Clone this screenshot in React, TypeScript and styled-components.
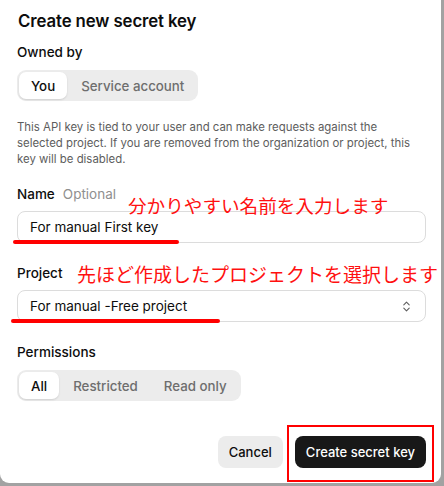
import React from "react";
import styled, { createGlobalStyle } from "styled-components";
import { ChevronsUpDown } from "lucide-react";

const GlobalStyle = createGlobalStyle`
  html, body {
    margin: 0;
    padding: 0;
    background: #a2a2a2;
    overflow: hidden;
  }
  * {
    box-sizing: border-box;
  }
`;

const Card = styled.div`
  position: relative;
  width: 441px;
  height: 483px;
  background: #ffffff;
  border-radius: 0 0 9px 9px;
  padding: 9px 15px 0 17px;
  font-family: Inter, "Noto Sans", sans-serif;
  color: #0d0d0d;
  display: flex;
  flex-direction: column;
`;

const Title = styled.h2`
  margin: 0 0 0 1px;
  font-size: 16.8px;
  line-height: 24px;
  font-weight: 600;
  letter-spacing: -0.1px;
`;

const Label = styled.div<{ $top: number }>`
  margin-top: ${(p) => p.$top}px;
  font-size: 13.5px;
  line-height: 20px;
  font-weight: 500;
  display: flex;
  gap: 8px;
`;

const Hint = styled.span`
  color: #8f8f8f;
  font-weight: 400;
`;

const Segmented = styled.div`
  margin-top: 8px;
  align-self: flex-start;
  display: flex;
  padding: 2px;
  gap: 2px;
  background: #ececec;
  border-radius: 9px;
`;

const Segment = styled.div<{ $active?: boolean }>`
  height: 27px;
  padding: 0 12px;
  display: flex;
  align-items: center;
  border-radius: 7px;
  font-size: 13.3px;
  font-weight: 500;
  color: ${(p) => (p.$active ? "#0d0d0d" : "#6e6e6e")};
  background: ${(p) => (p.$active ? "#ffffff" : "transparent")};
  box-shadow: ${(p) => (p.$active ? "0 1px 2px rgba(0,0,0,0.12)" : "none")};
`;

const Description = styled.p`
  margin: 18px 0 0;
  font-size: 11.4px;
  line-height: 16px;
  color: #5d5d5d;
`;

const Field = styled.div`
  margin-top: 7px;
  height: 32px;
  border: 1px solid #dcdcdc;
  border-radius: 8px;
  padding: 0 12px;
  display: flex;
  align-items: center;
  justify-content: space-between;
  font-size: 13.5px;
  color: #0d0d0d;
`;

const Footer = styled.div`
  margin-top: 35px;
  display: flex;
  justify-content: flex-end;
  gap: 12px;
`;

const Button = styled.button<{ $primary?: boolean }>`
  height: 32px;
  padding: 0 11px;
  border: none;
  border-radius: 8px;
  font-family: Inter, "Noto Sans", sans-serif;
  font-size: 13px;
  font-weight: 500;
  color: ${(p) => (p.$primary ? "#ffffff" : "#0d0d0d")};
  background: ${(p) => (p.$primary ? "#181818" : "#ececec")};
`;

const Note = styled.div<{ $x: number; $y: number; $size: number }>`
  position: absolute;
  left: ${(p) => p.$x}px;
  top: ${(p) => p.$y}px;
  font-family: "Noto Sans CJK JP", sans-serif;
  font-size: ${(p) => p.$size}px;
  line-height: 1;
  color: #ff1010;
  white-space: nowrap;
`;

const Underline = styled.div<{ $x: number; $y: number; $w: number }>`
  position: absolute;
  left: ${(p) => p.$x}px;
  top: ${(p) => p.$y}px;
  width: ${(p) => p.$w}px;
  height: 4px;
  border-radius: 2px;
  background: #ff0000;
`;

const HighlightBox = styled.div`
  position: absolute;
  left: 287px;
  top: 425px;
  width: 147px;
  height: 57px;
  border: 2px solid #ff0000;
`;

export default function App() {
  return (
    <>
      <GlobalStyle />
      <Card>
        <Title>Create new secret key</Title>

        <Label $top={9}>Owned by</Label>
        <Segmented>
          <Segment $active>You</Segment>
          <Segment>Service account</Segment>
        </Segmented>

        <Description>
          This API key is tied to your user and can make requests against the
          selected project. If you are removed from the organization or project,
          this key will be disabled.
        </Description>

        <Label $top={17}>
          Name <Hint>Optional</Hint>
        </Label>
        <Field>For manual First key</Field>

        <Label $top={20}>Project</Label>
        <Field>
          For manual -Free project
          <ChevronsUpDown size={13} color="#5d5d5d" strokeWidth={2} />
        </Field>

        <Label $top={20}>Permissions</Label>
        <Segmented>
          <Segment $active>All</Segment>
          <Segment>Restricted</Segment>
          <Segment>Read only</Segment>
        </Segmented>

        <Footer>
          <Button>Cancel</Button>
          <Button $primary>Create secret key</Button>
        </Footer>

        <Note $x={128} $y={196} $size={18.6}>
          分かりやすい名前を入力します
        </Note>
        <Underline $x={13} $y={240} $w={166} />
        <Note $x={77} $y={264} $size={19}>
          先ほど作成したプロジェクトを選択します
        </Note>
        <Underline $x={11} $y={319} $w={209} />
        <HighlightBox />
      </Card>
    </>
  );
}
